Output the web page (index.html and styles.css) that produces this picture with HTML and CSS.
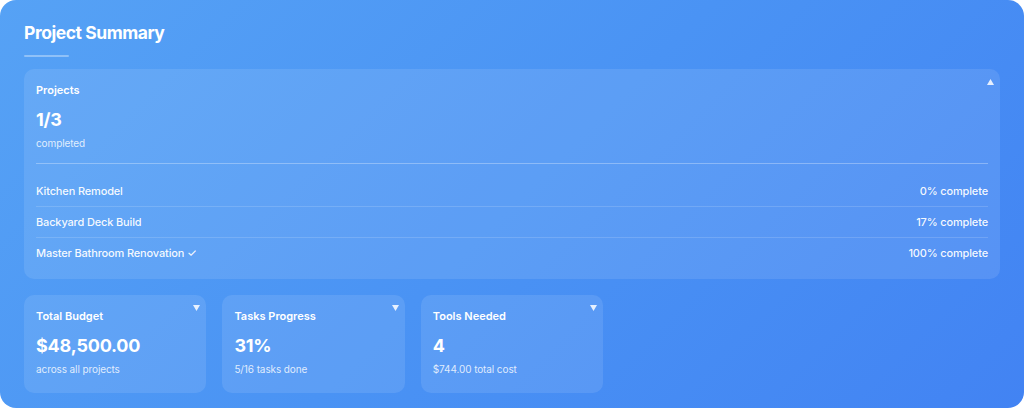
FILE: index.html
```html
<!DOCTYPE html>
<html lang="en">
<head>
<meta charset="utf-8">
<title>Project Summary</title>
<link rel="stylesheet" href="styles.css">
</head>
<body>
<section class="summary">
  <h2 class="summary-title">Project Summary</h2>
  <div class="title-rule"></div>
  <div class="grid">
    <div class="card card-wide">
      <svg class="toggle" width="7" height="6" viewBox="0 0 7 6"><polygon points="3.5,0 7,6 0,6"/></svg>
      <div class="card-head">
        <div class="label">Projects</div>
        <div class="value">1/3</div>
        <div class="sub">completed</div>
      </div>
      <ul class="rows">
        <li class="row"><span>Kitchen Remodel</span><span>0% complete</span></li>
        <li class="row"><span>Backyard Deck Build</span><span>17% complete</span></li>
        <li class="row"><span>Master Bathroom Renovation ✓</span><span>100% complete</span></li>
      </ul>
    </div>
    <div class="card">
      <svg class="toggle" width="7" height="6" viewBox="0 0 7 6"><polygon points="0,0 7,0 3.5,6"/></svg>
      <div class="label">Total Budget</div>
      <div class="value">$48,500.00</div>
      <div class="sub">across all projects</div>
    </div>
    <div class="card">
      <svg class="toggle" width="7" height="6" viewBox="0 0 7 6"><polygon points="0,0 7,0 3.5,6"/></svg>
      <div class="label">Tasks Progress</div>
      <div class="value">31%</div>
      <div class="sub">5/16 tasks done</div>
    </div>
    <div class="card">
      <svg class="toggle" width="7" height="6" viewBox="0 0 7 6"><polygon points="0,0 7,0 3.5,6"/></svg>
      <div class="label">Tools Needed</div>
      <div class="value">4</div>
      <div class="sub">$744.00 total cost</div>
    </div>
  </div>
</section>
</body>
</html>
```

FILE: styles.css
```css
html, body {
  margin: 0;
  padding: 0;
  background: #ffffff;
}
body {
  font-family: Inter, "Noto Sans", "DejaVu Sans", sans-serif;
  color: #ffffff;
}
.summary {
  box-sizing: border-box;
  width: 1024px;
  height: 408px;
  padding: 22px 24px 17px;
  border-radius: 16px;
  background: linear-gradient(135deg, #56a2f5 0%, #4a93f4 50%, #4283f3 100%);
}
.summary-title {
  margin: 0;
  font-size: 17.5px;
  line-height: 22px;
  font-weight: 700;
  letter-spacing: -0.45px;
}
.title-rule {
  width: 45px;
  height: 2px;
  margin-top: 11px;
  border-radius: 1px;
  background: rgba(255, 255, 255, 0.35);
}
.grid {
  margin-top: 12px;
  display: grid;
  grid-template-columns: repeat(5, 1fr);
  gap: 16px;
}
.card {
  position: relative;
  padding: 13px 12px 17px;
  border-radius: 10px;
  background: rgba(255, 255, 255, 0.1);
}
.card-wide {
  grid-column: 1 / -1;
  padding-bottom: 11px;
}
.toggle {
  position: absolute;
  top: 10px;
  right: 6px;
  fill: rgba(255, 255, 255, 0.85);
}
.label {
  font-size: 11px;
  line-height: 16px;
  font-weight: 600;
}
.value {
  margin-top: 11px;
  font-size: 18px;
  line-height: 22px;
  font-weight: 700;
  letter-spacing: -0.2px;
}
.sub {
  margin-top: 5px;
  font-size: 10px;
  line-height: 14px;
  letter-spacing: -0.1px;
  color: rgba(255, 255, 255, 0.82);
}
.card-head {
  padding-bottom: 13px;
  border-bottom: 1px solid rgba(255, 255, 255, 0.3);
}
.rows {
  list-style: none;
  margin: 12px 0 0;
  padding: 0;
}
.row {
  display: flex;
  justify-content: space-between;
  padding: 8px 0;
  font-size: 11px;
  line-height: 14px;
  font-weight: 500;
  letter-spacing: -0.15px;
  color: rgba(255, 255, 255, 0.95);
  border-bottom: 1px solid rgba(255, 255, 255, 0.15);
}
.row:last-child {
  border-bottom: none;
}
```
